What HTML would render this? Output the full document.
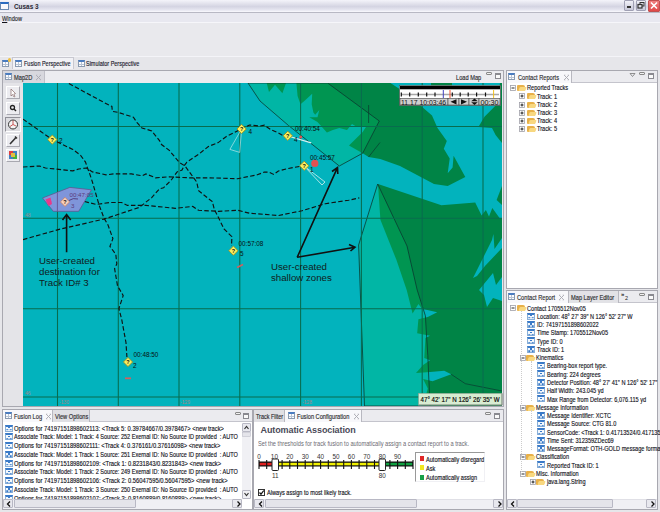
<!DOCTYPE html>
<html><head><meta charset="utf-8">
<style>
*{margin:0;padding:0;box-sizing:border-box}
html,body{width:660px;height:512px;overflow:hidden;background:#e6e6ea;font-family:"Liberation Sans",sans-serif;font-size:7px;color:#222}
.a{position:absolute}
.t{position:absolute;white-space:nowrap;line-height:8px}
#title{left:0;top:0;width:660px;height:13px;background:linear-gradient(#f4f4fa,#d4d4e2 55%,#e8e8f2 85%,#fafafe);border-bottom:1px solid #b8b8c4}
#menu{left:0;top:13px;width:660px;height:9.5px;background:#e8e8f0;border-bottom:1px solid #f6f6fa}
#tool{left:0;top:22.5px;width:660px;height:34px;background:#e9e9ed;border-bottom:1px solid #f4f4f8}
.pnl{position:absolute;background:#fff;border:1px solid #a8a8b0}
.trow{position:absolute;left:0;top:0;right:0;height:12px;background:#ebebef;border-bottom:1px solid #c0c0c8}
.tab{position:absolute;top:0;height:12px;border-right:1px solid #b0b0b8;line-height:12px;white-space:nowrap;font-size:7px;color:#333}
.ico{position:absolute;width:7px;height:7px;border:1px solid #8a9ab0;background:#fcfcfe;border-top:2px solid #4a7cc0}
.ico::after{content:"";position:absolute;left:2px;top:0;width:0;height:4px;border-left:1px solid #b8c4d4}
.ico::before{content:"";position:absolute;left:0;top:1.5px;width:5px;height:0;border-top:1px solid #b8c4d4}
.cls{position:absolute;width:5px;height:5px;color:#999;font-size:7px;line-height:5px}
.mn{position:absolute;width:6px;height:3px;border:1px solid #888;border-radius:1px;background:#f0f0f0}
.mx{position:absolute;width:6px;height:6px;border:1px solid #8a8a90;border-top-width:2px;background:#fafafa}
.row{position:absolute;white-space:nowrap;font-size:7px;line-height:8px;color:#1a1a2a}
.gi{position:absolute;width:7.5px;height:7px;background:#f4f8fc;border:1px solid #8ab0d8;border-top:2px solid #3a7ac8}
.gi::after{content:"";position:absolute;left:2.4px;top:0.6px;width:1.3px;height:1.3px;background:#3a7ac8;box-shadow:-1.7px 2.2px 0 #3a7ac8,1.7px 2.2px 0 #3a7ac8}
.fold{position:absolute;width:8px;height:6px;background:#e8b048;border-radius:1px 2px 1px 1px}
.fold::after{content:"";position:absolute;left:1.5px;top:2px;width:7px;height:4px;background:#f8d880;transform:skewX(-20deg);border-radius:1px}
.ex{position:absolute;width:5px;height:5px;border:1px solid #a8a8b0;background:#fff;font-size:0;color:transparent}
.ex::before{content:"";position:absolute;left:0.5px;top:1.5px;width:2px;height:0;border-top:1px solid #222}
.ex.p::after{content:"";position:absolute;left:1px;top:0.5px;width:0;height:2px;border-left:1px solid #222}
.sb{position:absolute;background:#f0f0f4;border:1px solid #d0d0d8}
.s{position:absolute;white-space:nowrap;font-size:7px;line-height:8px;letter-spacing:0;transform:scaleX(0.8);transform-origin:0 0;margin-top:0.8px;color:#101018;-webkit-text-stroke:0.14px #101018}
.sbtn{position:absolute;background:#e8e8ee;border:1px solid #b8b8c4;border-radius:1px}
</style></head><body>
<!-- title bar -->
<div id="title" class="a"></div>
<div class="a" style="left:0;top:2px;width:9px;height:7.5px;border:1px solid #6a88b0;border-top:2px solid #2a6ac0;background:#f8f8fc"></div>
<div class="t" style="left:13.6px;top:2px;font-size:8px;line-height:10px;font-weight:bold;color:#2a2a34;transform:scaleX(0.8);transform-origin:0 0">Cusas 3</div>
<div class="a" style="left:624px;top:0;width:10px;height:11px;background:linear-gradient(#f0f0f8,#c8c8d8);border:1px solid #a0a0b4;border-radius:1px"></div>
<div class="a" style="left:627px;top:6px;width:4px;height:2px;background:#333"></div>
<div class="a" style="left:636px;top:0;width:10px;height:11px;background:linear-gradient(#f0f0f8,#c8c8d8);border:1px solid #a0a0b4;border-radius:1px"></div>
<svg class="a" style="left:636px;top:0" width="10" height="11"><rect x="4" y="2.5" width="4" height="3.5" fill="none" stroke="#333" stroke-width="1"/><rect x="2" y="4.5" width="4" height="3.5" fill="#e0e0ea" stroke="#333" stroke-width="1.2"/></svg>
<div class="a" style="left:648px;top:0;width:12px;height:12px;background:linear-gradient(#f08080,#e04848);border:1px solid #c05050;border-radius:1px"></div>
<svg class="a" style="left:648px;top:0" width="12" height="12"><path d="M3 2.5 L9 8.5 M9 2.5 L3 8.5" stroke="#fff" stroke-width="1.6"/></svg>
<div id="menu" class="a"></div>
<div class="s" style="left:2px;top:14px;color:#333"><u>W</u>indow</div>
<div id="tool" class="a"></div>

<!-- perspective bar -->
<div class="ico" style="left:2px;top:60px"></div>
<div class="a" style="left:7.5px;top:58px;width:3.5px;height:3.5px;background:#f0c040;border-radius:2px"></div>
<div class="a" style="left:12px;top:57px;width:62px;height:12px;background:#f2f2f6;border:1px solid #c8c8d0;border-bottom:none"></div>
<div class="ico" style="left:15px;top:60px"></div>
<div class="s" style="left:24px;top:59.5px;color:#223;font-size:6.85px">Fusion Perspective</div>
<div class="ico" style="left:78px;top:60px"></div>
<div class="s" style="left:86px;top:59.5px;color:#223;font-size:6.85px">Simulator Perspective</div>

<!-- Map2D panel -->
<div class="pnl" style="left:2px;top:70px;width:502px;height:337px;background:#e6e6ea"></div>
<div class="a" style="left:3px;top:71px;width:500px;height:12px;background:#ececf0"></div>
<div class="a" style="left:3px;top:71px;width:42px;height:12px;background:#d8d8de;border-right:1px solid #c0c0c8"></div>
<div class="ico" style="left:5px;top:73px"></div>
<div class="s" style="left:14px;top:73px;color:#333;font-size:7.1px">Map2D</div>
<svg class="a" style="left:35.0px;top:74.0px" width="7" height="7"><path d="M1 1 L6 6 M6 1 L1 6" stroke="#a8a8b0" stroke-width="0.9"/><path d="M1 1 H2.5 M4.5 1 H6 M1 6 H2.5 M4.5 6 H6" stroke="#c0c0c8" stroke-width="0.6"/></svg>
<div class="s" style="left:456px;top:73px;color:#333;font-size:7.1px">Load Map</div>
<div class="mn" style="left:486px;top:72px"></div>
<div class="mx" style="left:495px;top:73px"></div>
<!-- map toolbar -->
<div class="a" style="left:3px;top:83px;width:20px;height:323px;background:#e4e4e8"></div>
<div class="a" style="left:6px;top:86px;width:14px;height:13px;background:#ececf0;border:1px solid #fff;border-right-color:#a8a8b0;border-bottom-color:#a8a8b0"></div>
<div class="a" style="left:6px;top:102px;width:14px;height:13px;background:#ececf0;border:1px solid #fff;border-right-color:#a8a8b0;border-bottom-color:#a8a8b0"></div>
<div class="a" style="left:5px;top:117px;width:16px;height:15px;background:#dcdce0;border:1px solid #909098;border-right-color:#fff;border-bottom-color:#fff"></div>
<div class="a" style="left:6px;top:134px;width:14px;height:13px;background:#ececf0;border:1px solid #fff;border-right-color:#a8a8b0;border-bottom-color:#a8a8b0"></div>
<div class="a" style="left:6px;top:149px;width:14px;height:13px;background:#ececf0;border:1px solid #fff;border-right-color:#a8a8b0;border-bottom-color:#a8a8b0"></div>
<svg class="a" style="left:0;top:0" width="30" height="170">
<path d="M11 89 L11 96 L12.5 94.5 L14 97 L15 96.5 L13.8 94 L15.5 93.5 Z" fill="#fff" stroke="#8a6a6a" stroke-width="0.7"/>
<circle cx="12.5" cy="107.5" r="2" fill="none" stroke="#222" stroke-width="1.3"/><path d="M14 109 L16 111" stroke="#222" stroke-width="1.5"/>
<circle cx="13" cy="124.5" r="4.5" fill="#f4f4f4" stroke="#333" stroke-width="1"/><path d="M13 124.5 L13 120.5 M13 124.5 L16 126 M13 124.5 L10 126.5" stroke="#c03030" stroke-width="0.8"/>
<path d="M10 144 L16 137.5 M15 136.5 L17 138.5" stroke="#333" stroke-width="1.6"/>
<rect x="9" y="151" width="8" height="8" fill="#4080c0"/><rect x="9" y="151" width="4" height="4" fill="#e04040"/><rect x="13" y="155" width="4" height="4" fill="#40b040"/><rect x="11" y="153" width="4" height="4" fill="#e0c040"/>
</svg>

<!-- MAP -->
<svg class="a" style="left:0;top:0" width="660" height="512">
<defs><clipPath id="mc"><rect x="23" y="83" width="479" height="323"/></clipPath></defs>
<g clip-path="url(#mc)">
<rect x="23" y="83" width="479" height="323" fill="#02b3bd"/>
<!-- dark land -->
<g fill="#008446">
<!-- top land mass -->
<path d="M266.7 83 L269 92 L275 84.8 L282.4 93.3 L286 83 L296.4 83 L297.6 96 L300.5 104.3 L304.6 100.8 L312.2 93.7 L311.7 104.3 L313.4 112.5 L315.2 114.8 L319.3 110.1 L317.5 117.2 L309.3 117.2 L317.5 121.9 L326.9 132.4 L332.8 130 L339.3 128 L347 130 L352 124 L357 127 L366.6 126 L362.7 132 L349 145.4 L362.7 153.2 L368.6 157 L380.3 159 L400 166 L434 184 L447.7 186 L465.3 177 L453.6 155.7 L452.6 167.4 L447.7 173.2 L449.7 158.6 L443.8 148.8 L446.8 141 L437.5 128 L432 115.6 L421 106 L410 97 L399.6 89 L390.4 83 Z"/>

<path d="M431 83 L452 83 L452 87 L431 87 Z"/>
<!-- right edge top -->
<path d="M478.4 127 L484.5 116.8 L492.7 108.6 L497 104 L500 83 L502 83 L502 143 L495.6 135 L492 128 Z"/>
<path d="M496.6 200 L502 186 L502 205 Z"/>
<!-- big southern land -->
<path d="M378 184 L441.4 205.2 L475.2 202.5 L481.6 215.4 L485.9 210 L489 216.5 L492.3 207.9 L499.9 218.6 L502 218 L502 406 L423 406 L427.8 388.4 L423.1 379 L432.5 381.3 L451.2 374.3 L444.2 370.8 L430.1 372 L416 373.1 L423.1 365 L430.1 360.3 L424.3 358 L425.4 338 L430 335.7 L417.2 333.3 L418.4 319.3 L427.8 317 L437.2 312.2 L422 308.7 L418.4 304 L412.6 313.4 L406.7 290 L396.3 259.6 L380.4 219.8 Z"/>
<path d="M473 278 L492 240 L493.4 234 L494.5 249 L502 238 L502 248 L485 266 L477 276 Z" fill="#02b3bd"/>
<path d="M479 290 L493 273 L496 285 L502 277 L502 301 L493 298 L487 307 L484 295 Z" fill="#02b3bd"/>
</g>
<!-- shallow zones overlays -->
<path d="M248 83 L260 101 L288.5 125.5 L339.3 166 L362.7 153.2 L379.3 121 L327.6 83 Z" fill="#00be6e" fill-opacity="0.3" stroke="#0a3a30" stroke-width="0.8"/>
<path d="M377.7 184 L358.6 245 L364.5 406 L430 406 L427.8 355.6 L426.6 336.8 L425.4 315.8 L417.2 290 L407 246 Z" fill="#00be6e" fill-opacity="0.3" stroke="#0a3a30" stroke-width="0.8"/>
<path d="M368.6 105 L368.6 123 M368.6 157 L380 142.5 M451.2 374.3 L465.3 383.7 L502 391" stroke="#0a3a30" stroke-width="0.7" fill="none"/>
<!-- grid -->
<g stroke="#086c4e" stroke-width="1.05">
<path d="M57.5 83V406M118.3 83V406M179 83V406M239.8 83V406M300.6 83V406M361.4 83V406M422.2 83V406M483 83V406"/>
<path d="M23 126.5H502M23 218.2H502M23 308.8H502M23 397H502"/>
</g>
<!-- tracks -->
<g fill="none" stroke="#111" stroke-width="1.15" stroke-dasharray="4.5 2.3">
<path d="M68.9 83.6 L78.7 88.8 L104 102.5 L111.9 106.4 L112.3 111.3 L117.8 112.3 L133.4 117.2 L137.3 123 L142 128 L151.7 130.9 L159.5 140.6 L161.5 144.5 L169.3 150.4 L179 162.1 L185 166 L190.8 173.9 L196.7 182 L198.6 190.7 L208.4 198.6 L212.3 201.5 L214.3 209.3 L218.2 217.1 L224 228.9 L231.9 236.7 L231.5 246"/>
<path d="M23 119.1 L52.3 139.6 L72.8 149.4 L80.6 155.3 L85.5 162.1 L87.5 168 L89.4 172.9 L92.4 182 L99.2 205.4 L104 218.1 L108 225 L112.9 238.6 L109.9 246.4 L115.8 254.3 L116.8 264 L114.6 268.6 L117.5 285.7 L123.2 295.6 L118.9 308.5 L121.8 319.9 L126 342.7 L126.9 357"/>
<path d="M23 167 L39.6 166 L45.5 168 L72.8 170.9 L78.7 169 L86.5 168 L92.4 171.9 L106 174.8 L113.9 173.9 L131.4 173.9 L142 175.8 L145.9 173.9 L155.6 177.8 L169.3 176.8 L188.9 177.8 L208.4 177.8 L237.7 178.7 L257.3 174.8 L264.4 172 L269 172.1 L273.7 174.4 L278.4 171 L287.8 168.6 L300.7 166.2"/>
<path d="M23 239.6 L61 228.9 L104 219.1 L139.3 207.4 L151.7 197.6 L159.5 188.8 L163.5 187.8 L171.3 180 L177.1 171.9 L182 170 L184 166 L186.9 162.1 L198.6 154.3 L208.4 146.5 L218.2 142.6 L226 136.7 L241.6 129 L249.4 125 L260 126 L264.4 125.2 L271.4 130 L277.3 132.3 L285.5 137"/>
<path d="M84.5 201.5 L96.3 204.4 L110 202.5 L121.7 202.5 L127.5 205.4 L145.9 205.4 L175.2 208.3 L192.8 206.4 L198.6 210.3 L218.2 211.3 L237.7 210.3 L249.4 213.2 L278.4 215.5 L301.9 210.8 L325.3 203.7 L348.7 200.2 L359.3 197.9"/>
</g>
<!-- destination polygon -->
<path d="M42.5 198 L69.9 187.4 L91.4 189.8 L78.7 211.3 L53.3 211.3 Z" fill="#8a92dc" fill-opacity="0.92" stroke="#6a4a8a" stroke-width="0.7"/><path d="M57.4 193V211.3" stroke="#6a5a9a" stroke-width="1"/>
<path d="M45.5 199.5 L50.5 197.5 L52 204 L48.5 206 Z" fill="#e83a8a"/><circle cx="49" cy="201.5" r="2.2" fill="#e83a8a"/>
<path d="M69 200.5 Q73 197.5 78 199" stroke="#4a2a6a" stroke-width="0.8" fill="none"/>
<!-- cones -->
<path d="M241.6 129 L229.9 149.4 L239.7 152.4 Z" fill="none" stroke="#d8f0f0" stroke-width="0.6"/>
<path d="M288 136 L311.2 142.8" stroke="#d8f0f0" stroke-width="1.2"/>
<path d="M304 166 L322 185 L325 182 Z" fill="none" stroke="#d8f0f0" stroke-width="0.8"/>
<circle cx="314.8" cy="163.4" r="3.6" fill="#e05252"/>
<circle cx="300.7" cy="137" r="1.5" fill="#e05252"/>
<path d="M237 267.5 L243 264.5" stroke="#d06060" stroke-width="1.8"/>
<path d="M125 378.3 L131 378.3" stroke="#d06060" stroke-width="1.8"/>
<!-- waypoints -->
<g stroke="#a09020" stroke-width="0.9">
<path d="M52.3 135.0 L56.9 139.6 L52.3 144.2 L47.7 139.6 Z" fill="#f8f060"/>
<path d="M241.6 124.4 L246.2 129.0 L241.6 133.6 L237.0 129.0 Z" fill="#f8f060"/>
<path d="M287.8 131.2 L292.4 135.8 L287.8 140.4 L283.2 135.8 Z" fill="#f8f060"/>
<path d="M304.2 161.2 L308.8 165.8 L304.2 170.4 L299.6 165.8 Z" fill="#f8f060"/>
<path d="M233.4 246.1 L238.0 250.7 L233.4 255.3 L228.8 250.7 Z" fill="#f8f060"/>
<path d="M128.0 357.4 L132.6 362.0 L128.0 366.6 L123.4 362.0 Z" fill="#f8f060"/>
<path d="M65.0 197.3 L69.6 201.9 L65.0 206.5 L60.4 201.9 Z" fill="#f8d0b8" stroke="#c08070"/>
</g>
<g fill="#111" font-size="5.5" font-family="Liberation Sans" text-anchor="middle" font-weight="bold">
<text x="52.3" y="141.6">?</text><text x="241.6" y="131">?</text><text x="287.8" y="137.8">?</text><text x="304.2" y="167.8">?</text><text x="233.4" y="252.7">?</text><text x="128" y="364">?</text><text x="65" y="203.9">?</text>
</g>
<g fill="#081010" font-size="6.4" font-family="Liberation Sans">
<text x="59" y="143">2</text>
<text x="248.5" y="134">4</text>
<text x="295" y="131">00:40:54</text><text x="294" y="142">4</text>
<text x="310" y="160">00:45:57</text><text x="310" y="172">1</text>
<text x="238.5" y="245.5">00:57:08</text><text x="240" y="256">5</text>
<text x="133.5" y="357">00:48:50</text><text x="133" y="367.5">2</text>
</g>
<g fill="#5a3a7a" font-size="6.2" font-family="Liberation Sans">
<text x="69.5" y="197">00:47:05</text><text x="71" y="208">3</text>
</g>
<g fill="#c87878" font-size="5" font-family="Liberation Sans" opacity="0.8">
<text x="25" y="395">46</text><text x="25" y="217">48</text><text x="59" y="403.5">-130</text><text x="180" y="403.5">-129</text><text x="302" y="403.5">-128</text>
</g>
<!-- annotation arrows -->
<g stroke="#111" stroke-width="1.6" fill="none">
<path d="M66.6 252.3 L66.6 215.5 M62.5 220 L66.6 214.5 L70.7 220"/>
<path d="M297.2 257.3 L337 168.6 M332 171.5 L337.5 167.5 L337.8 174"/>
<path d="M297.2 257.3 L355 247.3 M349 244.5 L355 247.3 L350.5 251"/>
</g>
<g fill="#101c1c" font-size="9.7" font-family="Liberation Sans">
<text x="39" y="264">User-created</text><text x="39" y="275">destination for</text><text x="39" y="285.5">Track ID# 3</text>
<text x="271" y="269.5">User-created</text><text x="271" y="281">shallow zones</text>
</g>
</g>
<!-- time widget -->
<rect x="399.5" y="85.5" width="101" height="20" fill="#d4d4d4" stroke="#555" stroke-width="0.6"/>
<rect x="400" y="86" width="100" height="3.5" fill="#000"/>
<rect x="400" y="89.5" width="100" height="9" fill="#fff"/>
<path d="M401 94.5 H499" stroke="#a8a8a8" stroke-width="1.4"/>
<g stroke="#111" stroke-width="1.2"><path d="M401.3 92.5V96.5M409.7 92.5V96.5M418.3 92.5V96.5M426.7 92.5V96.5M435 92.5V96.5M452.3 92.5V96.5M460.2 92.5V96.5M468.2 92.5V96.5M476.6 92.5V96.5M485.5 92.5V96.5"/></g>
<path d="M443.3 90V98" stroke="#4040c0" stroke-width="1"/>
<path d="M450 90V98" stroke="#f05030" stroke-width="1"/>
<path d="M493.6 90V98" stroke="#f0c020" stroke-width="1"/>
<g fill="#cfcfcf" stroke="#444" stroke-width="0.6">
<rect x="400" y="98.5" width="48" height="6.5"/><rect x="448" y="98.5" width="11" height="6.5"/><rect x="459" y="98.5" width="10" height="6.5"/><rect x="469" y="98.5" width="10" height="6.5"/><rect x="479" y="98.5" width="21" height="6.5"/>
</g>
<g fill="#111" font-size="6.6" font-family="Liberation Sans"><text x="401" y="104.6" textLength="45" lengthAdjust="spacingAndGlyphs">11.17 10:03:46</text><text x="480.5" y="104.6" textLength="18" lengthAdjust="spacingAndGlyphs">00:30</text></g>
<path d="M450.5 101.8 L456.5 99.2 V104.4 Z M467 101.8 L461 99.2 V104.4 Z M474.5 98.6 L477.8 101.3 H471.2 Z M474.5 105 L477.8 102.3 H471.2 Z" fill="#111"/>
<!-- coords box -->
<rect x="418.5" y="393.3" width="83.5" height="11.8" fill="#d8ecd2" stroke="#8a9a8a" stroke-width="0.5"/><path d="M419 405 H502 V393.5" stroke="#707a70" stroke-width="0.8" fill="none"/>
<text x="420.5" y="401.8" font-size="6.6" font-family="Liberation Sans" fill="#000" stroke="#000" stroke-width="0.15" textLength="79" lengthAdjust="spacingAndGlyphs">47° 42' 17" N 126° 26' 35" W</text>
</svg>

<!-- Contact Reports panel -->
<div class="pnl" style="left:506px;top:70px;width:152px;height:219px"></div>
<div class="a" style="left:507px;top:71px;width:150px;height:12px;background:#ebebef;border-bottom:1px solid #c4c4cc"></div>
<div class="a" style="left:507px;top:71px;width:65px;height:12px;background:#f8f8fb;border-right:1px solid #b8b8c0"></div>
<div class="ico" style="left:508px;top:73px"></div>
<div class="s" style="left:518px;top:73px;color:#333;font-size:7.1px">Contact Reports</div>
<svg class="a" style="left:563.0px;top:74.0px" width="7" height="7"><path d="M1 1 L6 6 M6 1 L1 6" stroke="#a8a8b0" stroke-width="0.9"/><path d="M1 1 H2.5 M4.5 1 H6 M1 6 H2.5 M4.5 6 H6" stroke="#c0c0c8" stroke-width="0.6"/></svg>
<svg class="a" style="left:628px;top:71px" width="30" height="10"><path d="M2 2.5 H7 L4.5 5.5 Z" fill="none" stroke="#777" stroke-width="0.8"/></svg>
<div class="mn" style="left:639px;top:72px"></div>
<div class="mx" style="left:648px;top:73px"></div>
<svg class="a" style="left:509.5px;top:85.0px" width="6" height="6"><rect x="0.5" y="0.5" width="5" height="5" fill="#fff" stroke="#a0a0a8" stroke-width="0.8"/><path d="M1.5 3 H4.5" stroke="#111" stroke-width="0.9"/></svg><div class="fold" style="left:517px;top:85px"></div><div class="s" style="left:527px;top:83.5px;">Reported Tracks</div><svg class="a" style="left:518.5px;top:93.3px" width="6" height="6"><rect x="0.5" y="0.5" width="5" height="5" fill="#fff" stroke="#a0a0a8" stroke-width="0.8"/><path d="M1.5 3 H4.5 M3 1.5 V4.5" stroke="#111" stroke-width="0.9"/></svg><div class="fold" style="left:527px;top:93.3px"></div><div class="s" style="left:537px;top:91.8px;">Track: 1</div><svg class="a" style="left:518.5px;top:101.6px" width="6" height="6"><rect x="0.5" y="0.5" width="5" height="5" fill="#fff" stroke="#a0a0a8" stroke-width="0.8"/><path d="M1.5 3 H4.5 M3 1.5 V4.5" stroke="#111" stroke-width="0.9"/></svg><div class="fold" style="left:527px;top:101.6px"></div><div class="s" style="left:537px;top:100.1px;">Track: 2</div><svg class="a" style="left:518.5px;top:109.7px" width="6" height="6"><rect x="0.5" y="0.5" width="5" height="5" fill="#fff" stroke="#a0a0a8" stroke-width="0.8"/><path d="M1.5 3 H4.5 M3 1.5 V4.5" stroke="#111" stroke-width="0.9"/></svg><div class="fold" style="left:527px;top:109.7px"></div><div class="s" style="left:537px;top:108.2px;">Track: 3</div><svg class="a" style="left:518.5px;top:117.8px" width="6" height="6"><rect x="0.5" y="0.5" width="5" height="5" fill="#fff" stroke="#a0a0a8" stroke-width="0.8"/><path d="M1.5 3 H4.5 M3 1.5 V4.5" stroke="#111" stroke-width="0.9"/></svg><div class="fold" style="left:527px;top:117.8px"></div><div class="s" style="left:537px;top:116.3px;">Track: 4</div><svg class="a" style="left:518.5px;top:126.0px" width="6" height="6"><rect x="0.5" y="0.5" width="5" height="5" fill="#fff" stroke="#a0a0a8" stroke-width="0.8"/><path d="M1.5 3 H4.5 M3 1.5 V4.5" stroke="#111" stroke-width="0.9"/></svg><div class="fold" style="left:527px;top:126px"></div><div class="s" style="left:537px;top:124.5px;">Track: 5</div>
<!-- Contact Report panel -->
<div class="pnl" style="left:506px;top:290px;width:152px;height:220px"></div>
<div class="a" style="left:507px;top:291px;width:150px;height:12px;background:#ebebef;border-bottom:1px solid #c4c4cc"></div>
<div class="a" style="left:507px;top:291px;width:62px;height:12px;background:#f8f8fb;border-right:1px solid #b8b8c0"></div>
<div class="a" style="left:569px;top:291px;width:50px;height:12px;background:#e2e2e6;border-right:1px solid #b8b8c0"></div>
<div class="ico" style="left:508px;top:293px"></div>
<div class="s" style="left:517px;top:293px;color:#333;font-size:7.1px">Contact Report</div>
<svg class="a" style="left:558.0px;top:294.0px" width="7" height="7"><path d="M1 1 L6 6 M6 1 L1 6" stroke="#a8a8b0" stroke-width="0.9"/><path d="M1 1 H2.5 M4.5 1 H6 M1 6 H2.5 M4.5 6 H6" stroke="#c0c0c8" stroke-width="0.6"/></svg>
<div class="s" style="left:571px;top:293px;color:#333;font-size:7.1px">Map Layer Editor</div>
<div class="t" style="left:621px;top:291px;color:#222;font-size:6px;font-weight:bold;line-height:6px">&raquo;</div><div class="t" style="left:625px;top:295px;color:#222;font-size:5.5px;line-height:6px">2</div>
<div class="mn" style="left:639px;top:293px"></div>
<div class="mx" style="left:648px;top:294px"></div>
<svg class="a" style="left:509.5px;top:305.3px" width="6" height="6"><rect x="0.5" y="0.5" width="5" height="5" fill="#fff" stroke="#a0a0a8" stroke-width="0.8"/><path d="M1.5 3 H4.5" stroke="#111" stroke-width="0.9"/></svg><div class="fold" style="left:517px;top:305.30px"></div><div class="s" style="left:527px;top:303.80px;">Contact 1705512Nov05</div><div class="gi" style="left:527px;top:312.57px"></div><div class="s" style="left:537px;top:312.07px;">Location: 48° 27' 39" N 126° 52' 27" W</div><div class="gi" style="left:527px;top:320.84px"></div><div class="s" style="left:537px;top:320.34px;">ID: 74197151898602022</div><div class="gi" style="left:527px;top:329.11px"></div><div class="s" style="left:537px;top:328.61px;">Time Stamp: 1705512Nov05</div><div class="gi" style="left:527px;top:337.38px"></div><div class="s" style="left:537px;top:336.88px;">Type ID: 0</div><div class="gi" style="left:527px;top:345.65px"></div><div class="s" style="left:537px;top:345.15px;">Track ID: 1</div><svg class="a" style="left:519.5px;top:354.92px" width="6" height="6"><rect x="0.5" y="0.5" width="5" height="5" fill="#fff" stroke="#a0a0a8" stroke-width="0.8"/><path d="M1.5 3 H4.5" stroke="#111" stroke-width="0.9"/></svg><div class="fold" style="left:526px;top:354.92px"></div><div class="s" style="left:536px;top:353.42px;">Kinematics</div><div class="gi" style="left:537px;top:362.19px"></div><div class="s" style="left:547px;top:361.69px;">Bearing-box report type.</div><div class="gi" style="left:537px;top:370.46px"></div><div class="s" style="left:547px;top:369.96px;">Bearing: 224 degrees</div><div class="gi" style="left:537px;top:378.73px"></div><div class="s" style="left:547px;top:378.23px;">Detector Position: 48° 27' 41" N 126° 52' 17"</div><div class="gi" style="left:537px;top:387.00px"></div><div class="s" style="left:547px;top:386.50px;">Half Width: 243.045 yd</div><div class="gi" style="left:537px;top:395.27px"></div><div class="s" style="left:547px;top:394.77px;">Max Range from Detector: 6,076.115 yd</div><svg class="a" style="left:519.5px;top:404.54px" width="6" height="6"><rect x="0.5" y="0.5" width="5" height="5" fill="#fff" stroke="#a0a0a8" stroke-width="0.8"/><path d="M1.5 3 H4.5" stroke="#111" stroke-width="0.9"/></svg><div class="fold" style="left:526px;top:404.54px"></div><div class="s" style="left:536px;top:403.04px;">Message Information</div><div class="gi" style="left:537px;top:411.81px"></div><div class="s" style="left:547px;top:411.31px;">Message Identifier: XCTC</div><div class="gi" style="left:537px;top:420.08px"></div><div class="s" style="left:547px;top:419.58px;">Message Source: CTG 81.0</div><div class="gi" style="left:537px;top:428.35px"></div><div class="s" style="left:547px;top:427.85px;">SensorCode: &lt;Track 1: 0.41713524/0.41713524&gt;</div><div class="gi" style="left:537px;top:436.62px"></div><div class="s" style="left:547px;top:436.12px;">Time Sent: 312359ZDec69</div><div class="gi" style="left:537px;top:444.89px"></div><div class="s" style="left:547px;top:444.39px;">MessageFormat: OTH-GOLD message format</div><svg class="a" style="left:519.5px;top:454.16px" width="6" height="6"><rect x="0.5" y="0.5" width="5" height="5" fill="#fff" stroke="#a0a0a8" stroke-width="0.8"/><path d="M1.5 3 H4.5" stroke="#111" stroke-width="0.9"/></svg><div class="fold" style="left:526px;top:454.16px"></div><div class="s" style="left:536px;top:452.66px;">Classification</div><div class="gi" style="left:537px;top:461.43px"></div><div class="s" style="left:547px;top:460.93px;">Reported Track ID: 1</div><svg class="a" style="left:519.5px;top:470.7px" width="6" height="6"><rect x="0.5" y="0.5" width="5" height="5" fill="#fff" stroke="#a0a0a8" stroke-width="0.8"/><path d="M1.5 3 H4.5" stroke="#111" stroke-width="0.9"/></svg><div class="fold" style="left:526px;top:470.70px"></div><div class="s" style="left:536px;top:469.20px;">Misc. Information</div><svg class="a" style="left:529.5px;top:478.97px" width="6" height="6"><rect x="0.5" y="0.5" width="5" height="5" fill="#fff" stroke="#a0a0a8" stroke-width="0.8"/><path d="M1.5 3 H4.5 M3 1.5 V4.5" stroke="#111" stroke-width="0.9"/></svg><div class="fold" style="left:536px;top:478.97px"></div><div class="s" style="left:547px;top:477.47px;">java.lang.String</div><div class="a" style="left:521px;top:311px;width:0;height:163px;border-left:1px dotted #ccc"></div><div class="a" style="left:531px;top:361px;width:0;height:40px;border-left:1px dotted #ccc"></div><div class="a" style="left:531px;top:410px;width:0;height:40px;border-left:1px dotted #ccc"></div><div class="a" style="left:507px;top:499px;width:150px;height:10px;background:#f0f0f4;border-top:1px solid #e0e0e6"></div>
<div class="sbtn" style="left:507px;top:499px;width:10px;height:9px"></div>
<svg class="a" style="left:508.5px;top:499.5px" width="8" height="8"><path d="M5 1.5 L2.5 4 L5 6.5" stroke="#111" stroke-width="1.3" fill="none"/></svg>
<div class="sbtn" style="left:517px;top:499px;width:96px;height:9px;background:#e4e4ea"></div>
<div class="sbtn" style="left:646px;top:499px;width:10px;height:9px"></div>
<svg class="a" style="left:648.5px;top:499.5px" width="8" height="8"><path d="M2.5 1.5 L5 4 L2.5 6.5" stroke="#111" stroke-width="1.3" fill="none"/></svg>

<!-- Fusion Log panel -->
<div class="pnl" style="left:2px;top:409px;width:251px;height:101px"></div>
<div class="a" style="left:3px;top:410px;width:249px;height:12px;background:#ebebef;border-bottom:1px solid #c4c4cc"></div>
<div class="a" style="left:3px;top:410px;width:50px;height:12px;background:#f8f8fb;border-right:1px solid #b8b8c0"></div>
<div class="a" style="left:53px;top:410px;width:37px;height:12px;background:#e0e0e4;border-right:1px solid #b8b8c0"></div>
<div class="ico" style="left:5px;top:412px"></div>
<div class="s" style="left:14px;top:412px;color:#333;font-size:7.1px">Fusion Log</div>
<svg class="a" style="left:45.0px;top:413.0px" width="7" height="7"><path d="M1 1 L6 6 M6 1 L1 6" stroke="#a8a8b0" stroke-width="0.9"/><path d="M1 1 H2.5 M4.5 1 H6 M1 6 H2.5 M4.5 6 H6" stroke="#c0c0c8" stroke-width="0.6"/></svg>
<div class="s" style="left:55px;top:412px;color:#333;font-size:7.1px">View Options</div>
<div class="mn" style="left:235px;top:412px"></div>
<div class="mx" style="left:243px;top:413px"></div>
<div class="a" style="left:3px;top:423px;width:239px;height:76px;overflow:hidden"><div class="gi" style="left:2px;top:1.50px"></div><div class="s" style="left:10.5px;top:0.80px;transform:scaleX(0.83)">Options for 74197151898602113: &lt;Track 5: 0.39784667/0.3978467&gt; &lt;new track&gt;</div><div class="gi" style="left:2px;top:10.25px"></div><div class="s" style="left:10.5px;top:9.55px;transform:scaleX(0.792)">Associate Track: Model: 1 Track: 4 Source: 252 Exernal ID: No Source ID provided &nbsp;: AUTO</div><div class="gi" style="left:2px;top:19.00px"></div><div class="s" style="left:10.5px;top:18.30px;transform:scaleX(0.83)">Options for 74197151898602111: &lt;Track 4: 0.376161/0.37616098&gt; &lt;new track&gt;</div><div class="gi" style="left:2px;top:27.75px"></div><div class="s" style="left:10.5px;top:27.05px;transform:scaleX(0.792)">Associate Track: Model: 1 Track: 1 Source: 251 Exernal ID: No Source ID provided &nbsp;: AUTO</div><div class="gi" style="left:2px;top:36.50px"></div><div class="s" style="left:10.5px;top:35.80px;transform:scaleX(0.83)">Options for 74197151898602109: &lt;Track 1: 0.8231843/0.8231843&gt; &lt;new track&gt;</div><div class="gi" style="left:2px;top:45.25px"></div><div class="s" style="left:10.5px;top:44.55px;transform:scaleX(0.792)">Associate Track: Model: 1 Track: 2 Source: 249 Exernal ID: No Source ID provided &nbsp;: AUTO</div><div class="gi" style="left:2px;top:54.00px"></div><div class="s" style="left:10.5px;top:53.30px;transform:scaleX(0.83)">Options for 74197151898602106: &lt;Track 2: 0.56047595/0.56047595&gt; &lt;new track&gt;</div><div class="gi" style="left:2px;top:62.75px"></div><div class="s" style="left:10.5px;top:62.05px;transform:scaleX(0.792)">Associate Track: Model: 1 Track: 3 Source: 250 Exernal ID: No Source ID provided &nbsp;: AUTO</div><div class="gi" style="left:2px;top:71.50px"></div><div class="s" style="left:10.5px;top:70.80px;transform:scaleX(0.83)">Options for 74197151898602107: &lt;Track 3: 0.8160889/0.8160889&gt; &lt;new track&gt;</div></div>
<div class="a" style="left:242px;top:423px;width:9px;height:76px;background:#f0f0f4"></div>
<div class="sbtn" style="left:242px;top:423px;width:9px;height:9px"></div>
<svg class="a" style="left:242px;top:423px" width="9" height="76"><path d="M2.5 6 L4.5 3.5 L6.5 6" stroke="#333" stroke-width="1.2" fill="none"/><rect x="0.5" y="9.5" width="8" height="4" fill="#e4e4ea" stroke="#b8b8c4" stroke-width="0.5"/><path d="M2.5 70 L4.5 72.5 L6.5 70" stroke="#333" stroke-width="1.2" fill="none"/></svg>
<div class="sbtn" style="left:242px;top:490px;width:9px;height:9px;background:transparent"></div>
<div class="a" style="left:3px;top:499px;width:239px;height:10px;background:#f0f0f4;border-top:1px solid #e0e0e6"></div>
<div class="sbtn" style="left:3px;top:499px;width:10px;height:9px"></div>
<svg class="a" style="left:4.5px;top:499.5px" width="8" height="8"><path d="M5 1.5 L2.5 4 L5 6.5" stroke="#111" stroke-width="1.3" fill="none"/></svg>
<div class="sbtn" style="left:14px;top:499px;width:122px;height:9px;background:#e4e4ea"></div>
<div class="sbtn" style="left:232px;top:499px;width:10px;height:9px"></div>
<svg class="a" style="left:234.5px;top:499.5px" width="8" height="8"><path d="M2.5 1.5 L5 4 L2.5 6.5" stroke="#111" stroke-width="1.3" fill="none"/></svg>

<!-- Fusion Configuration panel -->
<div class="pnl" style="left:253px;top:409px;width:251px;height:101px"></div>
<div class="a" style="left:254px;top:410px;width:249px;height:12px;background:#ebebef;border-bottom:1px solid #c4c4cc"></div>
<div class="a" style="left:254px;top:410px;width:31px;height:12px;background:#e0e0e4;border-right:1px solid #b8b8c0"></div>
<div class="a" style="left:285px;top:410px;width:77px;height:12px;background:#f8f8fb;border-right:1px solid #b8b8c0"></div>
<div class="s" style="left:255.5px;top:412px;color:#333;font-size:6.8px">Track Filter</div>
<div class="ico" style="left:288px;top:412px"></div>
<div class="s" style="left:297px;top:412px;color:#333;font-size:7.1px">Fusion Configuration</div>
<svg class="a" style="left:353.0px;top:413.0px" width="7" height="7"><path d="M1 1 L6 6 M6 1 L1 6" stroke="#a8a8b0" stroke-width="0.9"/><path d="M1 1 H2.5 M4.5 1 H6 M1 6 H2.5 M4.5 6 H6" stroke="#c0c0c8" stroke-width="0.6"/></svg>
<div class="mn" style="left:485px;top:412px"></div>
<div class="mx" style="left:494px;top:413px"></div>
<div class="t" style="left:260.5px;top:425px;font-size:9px;line-height:10px;font-weight:bold;color:#4a4a58;letter-spacing:-0.1px">Automatic Association</div>
<div class="s" style="left:258px;top:439px;font-size:7.1px;color:#6a6a72;-webkit-text-stroke:0">Set the thresholds for track fusion to automatically assign a contact report to a track.</div>
<svg class="a" style="left:250px;top:450px" width="240" height="35">
<g font-family="Liberation Sans" font-size="6.4" fill="#333">
<text x="9.0" y="9" text-anchor="middle">0</text><text x="24.4" y="9" text-anchor="middle">10</text><text x="39.8" y="9" text-anchor="middle">20</text><text x="55.2" y="9" text-anchor="middle">30</text><text x="70.6" y="9" text-anchor="middle">40</text><text x="86.0" y="9" text-anchor="middle">50</text><text x="101.4" y="9" text-anchor="middle">60</text><text x="116.8" y="9" text-anchor="middle">70</text><text x="132.2" y="9" text-anchor="middle">80</text><text x="147.6" y="9" text-anchor="middle">90</text>
<text x="25.2" y="27.5" text-anchor="middle">11</text><text x="132.2" y="27.5" text-anchor="middle">80</text>
</g>
<rect x="9.0" y="11.5" width="154.0" height="5" fill="#111"/>
<rect x="9.5" y="12.8" width="16.2" height="2.5" fill="#e02020"/>
<rect x="25.2" y="12.8" width="107.0" height="2.5" fill="#f0f000"/>
<rect x="132.2" y="12.8" width="30.3" height="2.5" fill="#10a040"/>
<g stroke="#111" stroke-width="1.1"><path d="M9.00 10V19M16.70 10V19M24.40 10V19M32.10 10V19M39.80 10V19M47.50 10V19M55.20 10V19M62.90 10V19M70.60 10V19M78.30 10V19M86.00 10V19M93.70 10V19M101.40 10V19M109.10 10V19M116.80 10V19M124.50 10V19M132.20 10V19M139.90 10V19M147.60 10V19M155.30 10V19M163.00 10V19"/></g>
<rect x="22.0" y="9" width="6.5" height="11.5" rx="1" fill="#fff" stroke="#222" stroke-width="1"/>
<rect x="129.0" y="9" width="6.5" height="11.5" rx="1" fill="#fff" stroke="#222" stroke-width="1"/>
</svg>
<div class="a" style="left:415px;top:452px;width:70px;height:30px;background:#fff;border:1px solid #f0f0f4;border-left-color:#999;border-top-color:#999"></div>
<div class="a" style="left:420px;top:456px;width:4px;height:5px;background:#e02828"></div>
<div class="a" style="left:420px;top:465px;width:4px;height:5px;background:#f0e820"></div>
<div class="a" style="left:420px;top:474.5px;width:4px;height:5px;background:#18a048"></div>
<div class="s" style="left:426px;top:455.5px">Automatically disregard</div>
<div class="s" style="left:426px;top:464.5px">Ask</div>
<div class="s" style="left:426px;top:473.5px">Automatically assign</div>
<div class="a" style="left:258px;top:488.8px;width:7px;height:7px;border:1px solid #333;background:#fff"></div>
<svg class="a" style="left:258px;top:488.8px" width="7" height="7"><path d="M1.5 3.5 L3 5.2 L5.8 1.5" stroke="#111" stroke-width="1.2" fill="none"/></svg>
<div class="s" style="left:267px;top:488px">Always assign to most likely track.</div>
<div class="a" style="left:254px;top:499px;width:249px;height:10px;background:#f0f0f4;border-top:1px solid #e0e0e6"></div>
<div class="sbtn" style="left:254px;top:499px;width:10px;height:9px"></div>
<svg class="a" style="left:256.5px;top:499.5px" width="8" height="8"><path d="M5 1.5 L2.5 4 L5 6.5" stroke="#111" stroke-width="1.3" fill="none"/></svg>
<div class="sbtn" style="left:265px;top:499px;width:152px;height:9px;background:#e4e4ea"></div>
<div class="sbtn" style="left:493px;top:499px;width:10px;height:9px"></div>
<svg class="a" style="left:495.5px;top:499.5px" width="8" height="8"><path d="M2.5 1.5 L5 4 L2.5 6.5" stroke="#111" stroke-width="1.3" fill="none"/></svg>
</body></html>
